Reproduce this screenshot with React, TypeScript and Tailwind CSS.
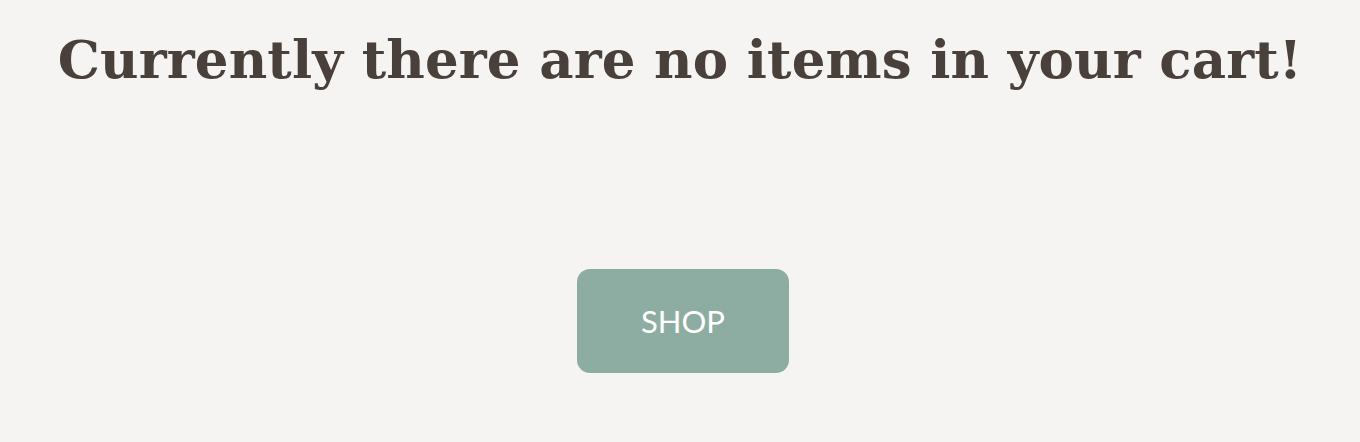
export default function App() {
  return (
    <div className="min-h-[442px] bg-[#f5f4f2] flex flex-col items-center pt-[22px]">
      <h1 className="whitespace-nowrap text-center text-[53px] leading-[74px] font-bold tracking-[0.12px] text-[#4a403b]" style={{ fontFamily: '"DejaVu Serif", serif' }}>
        Currently there are no items in your cart!
      </h1>
      <a
        href=""
        className="mt-[173px] ml-[6px] w-[212px] h-[104px] rounded-[13px] bg-[#8dada3] text-white flex items-center justify-center text-[31px] font-['Lato',sans-serif]"
      >
        SHOP
      </a>
    </div>
  );
}
